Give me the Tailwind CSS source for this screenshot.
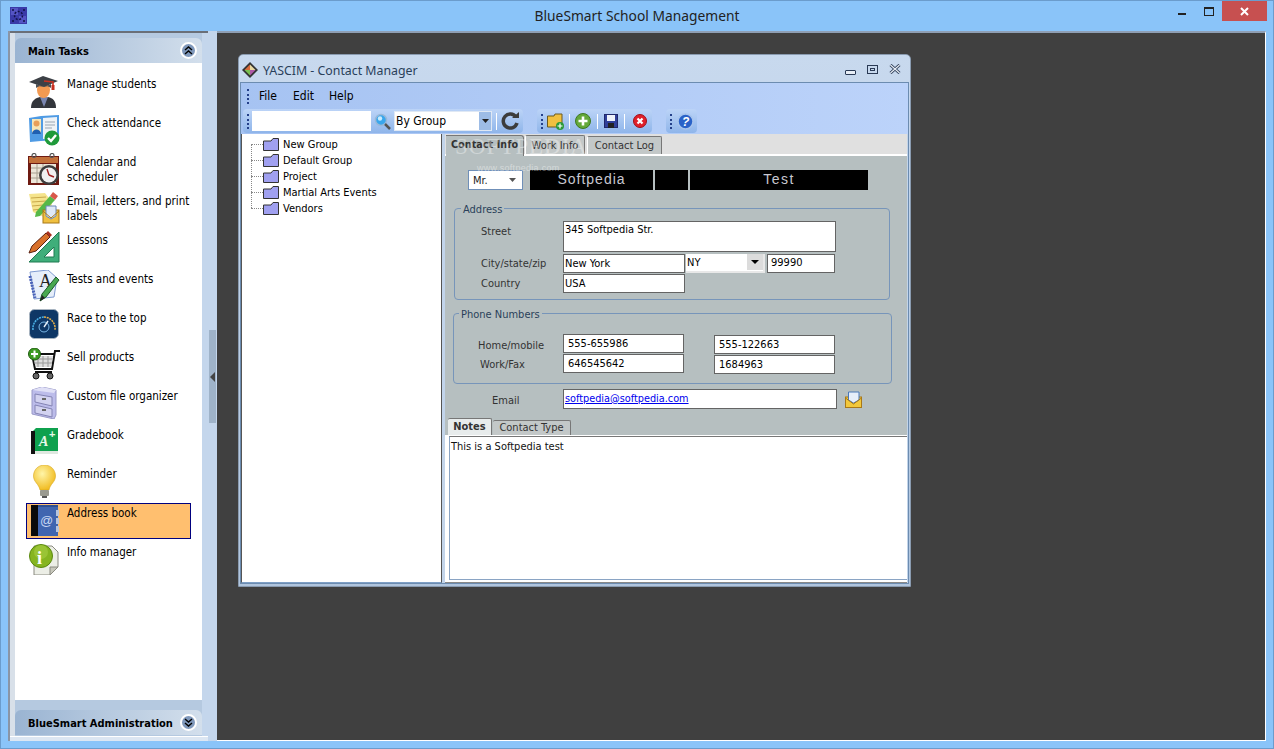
<!DOCTYPE html>
<html><head><meta charset="utf-8"><title>BlueSmart School Management</title>
<script src="https://cdn.jsdelivr.net/npm/@tailwindcss/browser@4"></script></head>
<body class="m-0 overflow-hidden">
<div class="w-[1274px] h-[749px] bg-[#8ac4f9] border border-[#6b9ccc] flex flex-col font-['DejaVu_Sans_Condensed','Noto_Sans',sans-serif] text-[11px] leading-[15px] text-black overflow-hidden">
  <!-- title bar -->
  <div class="h-[30px] shrink-0 flex items-start relative">
    <svg class="ml-[9px] mt-[6px]" width="17" height="17" viewBox="0 0 17 17"><rect width="17" height="17" fill="#3a3aa8"/><rect x="1" y="1" width="7" height="7" fill="#5454c4"/><rect x="9" y="9" width="7" height="7" fill="#5454c4"/><circle cx="8.5" cy="8.5" r="4" fill="none" stroke="#12124a" stroke-width="1.5" stroke-dasharray="2 1.5"/><circle cx="3" cy="3" r="1" fill="#12124a"/><circle cx="14" cy="3" r="1" fill="#12124a"/><circle cx="3" cy="14" r="1" fill="#12124a"/><circle cx="14" cy="14" r="1" fill="#12124a"/></svg>
    <div class="flex-1 pl-[69px] text-center font-['Noto_Sans',sans-serif] text-[13.8px] leading-[20px] mt-[5px] text-[#222]">BlueSmart School Management</div>
    <div class="w-[8px] h-[2px] bg-[#222] mt-[12px] mr-[18px]"></div>
    <div class="w-[10px] h-[9px] border border-[#222] border-t-2 mt-[6px] mr-[8px]"></div>
    <div class="w-[45px] h-[20px] bg-[#c75050] mr-[6px] flex items-center justify-center">
      <svg width="9" height="9" viewBox="0 0 9 9"><path d="M1 1 L8 8 M8 1 L1 8" stroke="#fff" stroke-width="2"/></svg>
    </div>
  </div>
  <!-- main -->
  <div class="flex flex-1 mx-[7px] mb-[7px] min-h-0">
    <!-- left panel -->
    <div class="w-[200px] bg-[#b5c9e0] border-l-2 border-[#8a95a5] flex flex-col relative">
      <div class="h-[2px] bg-[#6a6f78] mb-[5px]"></div>
      <div class="flex flex-1 min-h-0">
        <div class="w-[5px] bg-[#d8e0e9] mt-[-5px] mb-[0px]"></div>
        <div class="flex flex-col w-[187px]">
        <div class="h-[25px] rounded-t-[6px] bg-gradient-to-r from-[#9ab4d2] to-[#d3dfec] flex items-center pl-[13px] font-bold text-[11px]">
          <span class="flex-1 pt-[2px]">Main Tasks</span>
          <span class="w-[17px] h-[17px] rounded-full bg-[#7f98bb] border-2 border-white mr-[5px] flex items-center justify-center">
            <svg width="9" height="9" viewBox="0 0 9 9"><path d="M1 4 L4.5 1 L8 4 M1 8 L4.5 5 L8 8" fill="none" stroke="#000" stroke-width="1.4"/></svg>
          </span>
        </div>
        <div class="h-[637px] bg-white pt-[11px] pl-[11px] pr-[11px] flex flex-col gap-[3px] text-[11.5px]">
          <!-- items -->
          <div class="h-[36px] flex border border-transparent"><svg class="ml-[1px] mt-[1px] shrink-0" width="32" height="32" viewBox="0 0 32 32"><path d="M3 32 C3 24 8 22 12 21 L20 21 C25 22 28 25 28 32Z" fill="#33363c"/><path d="M12 21 L16 31 L20 21Z" fill="#7a86b0"/><ellipse cx="15.5" cy="14" rx="6.5" ry="8" fill="#f39a52"/><path d="M1 6 L15 0 L30 5 L16 11Z" fill="#3c4046"/><path d="M8 8 L8 12 C12 9 19 9 23 12 L23 8 L16 11Z" fill="#4c5056"/><path d="M16 5 L25 6 L25 13" fill="none" stroke="#c83020" stroke-width="1.6"/><rect x="23.5" y="9" width="3" height="5" fill="#c83020"/></svg><span class="ml-[7px] mt-[2px]">Manage students</span></div>
          <div class="h-[36px] flex border border-transparent"><svg class="ml-[1px] shrink-0" width="32" height="32" viewBox="0 0 32 32"><path d="M1 4 L13 2 L31 1 L31 26 L13 27 L2 28Z" fill="#4f9be4"/><path d="M15 4 L29 3 L29 24 L15 25Z" fill="#eef2f6"/><rect x="4" y="5" width="9" height="15" fill="#f6e6b8"/><circle cx="8.5" cy="9.5" r="3" fill="#e89f5a"/><path d="M4 20 C4 14 13 14 13 20Z" fill="#1f5fb0"/><path d="M17 8 H27 M17 11 H27 M17 14 H24" stroke="#9aa6b2" stroke-width="1"/><circle cx="24" cy="24" r="7.5" fill="#1f9a3a"/><path d="M20 24 L23 27 L28 21" fill="none" stroke="#fff" stroke-width="2.4"/></svg><span class="ml-[7px] mt-[2px]">Check attendance</span></div>
          <div class="h-[36px] flex border border-transparent"><svg class="ml-[1px] shrink-0" width="32" height="32" viewBox="0 0 32 32"><rect x="0" y="3" width="31" height="29" fill="#6e1a12"/><rect x="1" y="4" width="29" height="6" fill="#c2703a"/><rect x="3" y="11" width="25" height="19" fill="#ece6d8"/><path d="M3 15 H28 M3 20 H28 M3 25 H28 M9 11 V30 M15 11 V30" stroke="#a8a090" stroke-width="1"/><circle cx="6" cy="2.500" r="2" fill="none" stroke="#555" stroke-width="1.200"/><circle cx="24" cy="2.500" r="2" fill="none" stroke="#555" stroke-width="1.200"/><circle cx="21" cy="22" r="10" fill="#3c3c3c"/><circle cx="21" cy="22" r="7.500" fill="#f0f0f0"/><path d="M21 22 L19 16 M21 22 L26 24" stroke="#a02020" stroke-width="1.400"/></svg><span class="ml-[7px] mt-[2px]">Calendar and<br>scheduler</span></div>
          <div class="h-[36px] flex border border-transparent"><svg class="ml-[1px] shrink-0" width="32" height="32" viewBox="0 0 32 32"><path d="M1 2 L17 1 L24 10 L22 28 L5 20Z" fill="#f5e48c"/><path d="M3 6 L18 5 M4 10 L18 9 M4 14 L15 13 M5 18 L14 17" stroke="#c9a84a" stroke-width="1"/><path d="M8 20 L22 4 L27 8 L12 24 L7 25Z" fill="#57b848"/><path d="M22 4 L25 0 L30 4 L27 8Z" fill="#d8584a"/><rect x="15" y="18" width="16" height="13" fill="#f0c040" stroke="#a87818"/><path d="M18 14 H28 V24 L23 27 L18 24Z" fill="#dfe9f7" stroke="#6a88b8"/><path d="M15 19 L23 26 L31 19" fill="none" stroke="#a87818"/></svg><span class="ml-[7px] mt-[2px] whitespace-nowrap">Email, letters, and print<br>labels</span></div>
          <div class="h-[36px] flex border border-transparent"><svg class="ml-[1px] shrink-0" width="32" height="32" viewBox="0 0 32 32"><path d="M1 31 L31 1 V31Z" fill="#3fae7a" stroke="#1e7a50"/><path d="M16 26 L26 16 V26Z" fill="#fff" stroke="#1e7a50"/><path d="M1 22 L4 15 L18 2 L22 6 L8 20Z" fill="#d8702a" stroke="#5a2010"/><path d="M18 2 L20 0 L24 4 L22 6Z" fill="#a83020"/></svg><span class="ml-[7px] mt-[2px]">Lessons</span></div>
          <div class="h-[36px] flex border border-transparent"><svg class="ml-[1px] shrink-0" width="32" height="32" viewBox="0 0 32 32"><path d="M2 2 L20 0 L29 8 L26 27 L6 29Z" fill="#e6eefa" stroke="#7e9ad0"/><path d="M2 6 L7 28" stroke="#4a62b8" stroke-width="3" stroke-dasharray="2 1"/><text x="11" y="17" font-size="18" font-family="Liberation Serif" fill="#222">A</text><path d="M12 31 L14 24 L28 7 L31 10 L18 27Z" fill="#48a850" stroke="#1c5a28"/><path d="M12 31 L14 25 L17 28Z" fill="#222"/></svg><span class="ml-[7px] mt-[2px]">Tests and events</span></div>
          <div class="h-[36px] flex border border-transparent"><svg class="ml-[2px] shrink-0" width="30" height="30" viewBox="0 0 30 30"><rect x="0.500" y="0.500" width="29" height="29" rx="5" fill="#0e3766" stroke="#a8b4c0"/><path d="M4 21 A11.500 11.500 0 0 1 15 8" fill="none" stroke="#4bb2e8" stroke-width="1.500" stroke-dasharray="2 0.800"/><path d="M15 8 A11.500 11.500 0 0 1 26 21" fill="none" stroke="#e8b24b" stroke-width="1.500" stroke-dasharray="2 0.800"/><circle cx="15" cy="18" r="5" fill="none" stroke="#7ab8e8"/><path d="M15 18 L19 12" stroke="#e8f2fa" stroke-width="1.400"/></svg><span class="ml-[8px] mt-[2px]">Race to the top</span></div>
          <div class="h-[36px] flex border border-transparent"><svg class="ml-[1px] shrink-0" width="32" height="32" viewBox="0 0 32 32"><path d="M32 3 H27 L24 21 H7 L4 6 H26" fill="none" stroke="#111" stroke-width="2"/><path d="M5 8 H25 L23 19 H8Z" fill="#ddd"/><path d="M5 11 H25 M6 15 H24 M10 8 V19 M15 8 V19 M20 8 V19" stroke="#999"/><path d="M7 24 H24" stroke="#111" stroke-width="2"/><circle cx="8" cy="28" r="3" fill="#666" stroke="#111"/><circle cx="22" cy="28" r="3" fill="#666" stroke="#111"/><circle cx="6.500" cy="6" r="6" fill="#3c9a20" stroke="#1e5a10"/><path d="M6.500 2.500 V9.500 M3 6 H10" stroke="#fff" stroke-width="2"/></svg><span class="ml-[7px] mt-[2px]">Sell products</span></div>
          <div class="h-[36px] flex border border-transparent"><svg class="ml-[3px] shrink-0" width="28" height="32" viewBox="0 0 28 32"><path d="M2 3 L12 0 L26 3 V28 L24 32 L2 27Z" fill="#bcbcea" stroke="#9a9ac8"/><path d="M2 3 L12 0 L26 3 L24 6Z" fill="#e0e0f6"/><path d="M5 7 L22 10 V19 L5 15Z" fill="#d2d2f0" stroke="#8484b4"/><path d="M5 18 L22 22 V30 L5 26Z" fill="#d2d2f0" stroke="#8484b4"/><rect x="12" y="11" width="4" height="2" fill="#666"/><rect x="12" y="22" width="4" height="2" fill="#666"/></svg><span class="ml-[9px] mt-[2px]">Custom file organizer</span></div>
          <div class="h-[36px] flex border border-transparent"><svg class="ml-[4px] mt-[1px] shrink-0" width="28" height="28" viewBox="0 0 28 28"><path d="M1 5 L5 1 H27 L27 24 H5 L1 27Z" fill="#0fa14e"/><path d="M0 4 H4 V27 H0Z" fill="#111"/><path d="M4 24 H27 V27 H4Z" fill="#dfe8e0"/><text x="8" y="19" font-size="14" font-weight="bold" font-style="italic" font-family="Liberation Serif" fill="#e8f8e8">A</text><text x="18" y="11" font-size="11" font-weight="bold" font-family="Liberation Sans" fill="#e8f8e8">+</text></svg><span class="ml-[8px] mt-[2px]">Gradebook</span></div>
          <div class="h-[36px] flex border border-transparent"><svg class="ml-[6px] shrink-0" width="23" height="33" viewBox="0 0 23 33"><defs><radialGradient id="bulb" cx="0.4" cy="0.35" r="0.7"><stop offset="0" stop-color="#fff5a8"/><stop offset="1" stop-color="#f0b818"/></radialGradient></defs><path d="M11.500 0 C5 0 0.500 5 0.500 11 C0.500 17 6 19 7 25 H16 C17 19 22.500 17 22.500 11 C22.500 5 18 0 11.500 0Z" fill="url(#bulb)" stroke="#d8a820" stroke-width="0.600"/><rect x="7" y="25" width="9" height="6" rx="1" fill="#9a9a90"/><rect x="9" y="31" width="5" height="2" fill="#555"/></svg><span class="ml-[11px] mt-[2px]">Reminder</span></div>
          <div class="h-[36px] flex bg-[#ffbf6f] border border-[#00007f]"><svg class="ml-[4px] mt-[1px] shrink-0" width="28" height="32" viewBox="0 0 28 32"><rect x="0" y="0" width="27" height="31" fill="#4065b0"/><rect x="0" y="0" width="7" height="31" fill="#0a0a0a"/><path d="M7 0 H27 V2 H7Z" fill="#2f4f90"/><rect x="25" y="5" width="3" height="6" fill="#b8c4dc"/><rect x="25" y="13" width="3" height="6" fill="#b8c4dc"/><rect x="25" y="21" width="3" height="6" fill="#b8c4dc"/><text x="9" y="20" font-size="13" font-family="Liberation Sans" fill="#c8d8f4">@</text></svg><span class="ml-[8px] mt-[2px]">Address book</span></div>
          <div class="h-[36px] flex border border-transparent"><svg class="ml-[1px] shrink-0" width="32" height="32" viewBox="0 0 32 32"><path d="M6 3 H24 L30 9 V24 L22 32 H6Z" fill="#eceee6" stroke="#8a8a80"/><path d="M22 32 V24 H30Z" fill="#c8c8bc" stroke="#8a8a80"/><circle cx="13" cy="13" r="11.500" fill="#86b520" stroke="#5a8810"/><circle cx="13" cy="9" r="7" fill="#a8cf44" opacity="0.600"/><text x="9" y="21" font-size="18" font-weight="bold" font-family="Liberation Serif" fill="#fff">i</text></svg><span class="ml-[7px] mt-[2px]">Info manager</span></div>
        </div>
        <div class="h-[10px]"></div>
        <div class="h-[25px] rounded-t-[6px] bg-gradient-to-r from-[#9ab4d2] to-[#d3dfec] flex items-center pl-[13px] font-bold text-[11px]">
          <span class="flex-1 whitespace-nowrap pt-[2px]">BlueSmart Administration</span>
          <span class="w-[17px] h-[17px] rounded-full bg-[#7f98bb] border-2 border-white mr-[5px] flex items-center justify-center shrink-0">
            <svg width="9" height="9" viewBox="0 0 9 9"><path d="M1 1 L4.500 4 L8 1 M1 5 L4.500 8 L8 5" fill="none" stroke="#000" stroke-width="1.400"/></svg>
          </span>
        </div>
        </div>
        <div class="flex-1 bg-[#c4d6ec] mt-[-5px]"></div>
      </div>
      <div class="h-[5px] bg-[#dce6f2] border-t border-white"></div>
    </div>
    <!-- splitter -->
    <div class="w-[9px] bg-[#c4d6ec] flex flex-col items-center">
      <div class="mt-[299px] w-[7px] h-[93px] bg-[#9fb3c9] relative flex items-center">
        <svg width="6" height="10" viewBox="0 0 6 10" class="ml-[1px] mt-[0px]"><path d="M5 0 V10 L0 5Z" fill="#444"/></svg>
      </div>
    </div>
    <!-- MDI workspace -->
    <div class="flex-1 bg-[#404040] border-t-2 border-t-[#8f9fb4] border-r border-r-white border-b border-b-white relative">
      <!-- child window -->
      <div class="absolute left-[21px] top-[21px] w-[673px] h-[533px] rounded-t-[5px] bg-gradient-to-b from-[#c8d9ee] to-[#b0c5de] border border-[#8a9bb0] flex flex-col">
        <div class="h-[27px] shrink-0 flex items-center pl-[3px] pt-[3px] font-['Noto_Sans',sans-serif] text-[12.35px] text-[#2a3f5a]">
          <svg width="16" height="16" viewBox="0 0 16 16"><path d="M8 0 L16 8 L8 16 L0 8Z" fill="#333"/><path d="M8 2.500 L8 8 L2.500 8Z" fill="#d86a3a"/><path d="M8 2.500 L13.500 8 L8 8Z" fill="#e8d8a0"/><path d="M2.500 8 L8 8 L8 13.500Z" fill="#7ac050"/><path d="M13.500 8 L8 13.500 L8 8Z" fill="#b05aa8"/></svg>
          <span class="ml-[5px] flex-1">YASCIM - Contact Manager</span>
          <div class="w-[11px] h-[5px] border border-[#2a3a55] bg-[#e8eef6] rounded-[1px] mt-[4px] mr-[11px]"></div>
          <div class="w-[11px] h-[9px] border border-[#2a3a55] flex items-center justify-center mr-[11px] mt-[-2px]"><div class="w-[5px] h-[3px] border border-[#2a3a55]"></div></div>
          <svg class="mr-[9px] mt-[-2px]" width="12" height="10" viewBox="0 0 12 10"><path d="M1.500 1 L10.500 9 M10.500 1 L1.500 9" stroke="#2a3a55" stroke-width="3"/><path d="M1.500 1 L10.500 9 M10.500 1 L1.500 9" stroke="#e8eef6" stroke-width="1.200"/></svg>
        </div>
        <div class="flex-1 mx-[1px] mb-[2px] border border-[#6c8cb0] flex flex-col min-h-0 bg-white">
          <!-- menu + toolbar -->
          <div class="h-[51px] shrink-0 bg-gradient-to-r from-[#a6c3f2] to-[#bcd3fa] flex flex-col">
            <div class="h-[24px] flex items-center pl-[6px] pt-[2px] text-[12px]">
              <div class="w-[2px] h-[15px] border-l-2 border-dotted border-[#24408a]"></div>
              <span class="ml-[10px]">File</span><span class="ml-[16px]">Edit</span><span class="ml-[15px]">Help</span>
            </div>
            <div class="h-[27px] flex items-stretch pl-[2px] pt-[2px] pb-[1px] text-[12px]">
              <div class="w-[280px] rounded-[4px] bg-gradient-to-b from-[#bcd4f7] to-[#8fb5ea] flex items-center pl-[4px]">
                <div class="w-[2px] h-[15px] border-l-2 border-dotted border-[#24408a]"></div>
                <div class="ml-[3px] w-[119px] h-[20px] bg-white"></div>
                <svg class="ml-[3px]" width="17" height="17" viewBox="0 0 17 17"><circle cx="7" cy="7" r="5.500" fill="#39a6ec" stroke="#9ab8d8" stroke-width="1.500"/><circle cx="6" cy="5.500" r="2.200" fill="#c8ecff"/><path d="M11 11 L16 16" stroke="#555" stroke-width="2.500"/></svg>
                <div class="ml-[3px] w-[98px] h-[20px] bg-white border border-[#dfe8f4] flex items-center pl-[1px]"><span class="flex-1">By Group</span><span class="w-[12px] h-[18px] bg-[#9dbce6] flex items-center justify-center"><svg width="7" height="4" viewBox="0 0 7 4"><path d="M0 0 H7 L3.500 4Z" fill="#222"/></svg></span></div>
                <div class="ml-[4px] w-[1px] h-[17px] bg-white"></div>
                <svg class="ml-[4px]" width="18" height="18" viewBox="0 0 18 18"><path d="M15 5 A7 7 0 1 0 16 11" fill="none" stroke="#3c3c3c" stroke-width="3.500"/><path d="M11 6 H18 V0Z" fill="#3c3c3c"/></svg>
              </div>
              <div class="ml-[14px] w-[115px] rounded-[4px] bg-gradient-to-b from-[#bcd4f7] to-[#8fb5ea] flex items-center pl-[4px]">
                <div class="w-[2px] h-[15px] border-l-2 border-dotted border-[#24408a]"></div>
                <svg class="ml-[4px]" width="17" height="17" viewBox="0 0 17 17"><path d="M0.500 3 H7 L8 1 H15 V14 H0.500Z" fill="#f0c040" stroke="#6a5a20"/><circle cx="13" cy="13" r="4" fill="#2a9a3a"/><path d="M13 10.500 V15.500 M10.500 13 H15.500" stroke="#fff" stroke-width="1.200"/></svg>
                <div class="ml-[5px] w-[1px] h-[15px] bg-white"></div>
                <svg class="ml-[5px]" width="16" height="16" viewBox="0 0 16 16"><circle cx="8" cy="8" r="7.500" fill="#64a83a" stroke="#3e7820"/><path d="M8 3.500 V12.500 M3.500 8 H12.500" stroke="#fff" stroke-width="2.600"/></svg>
                <div class="ml-[6px] w-[1px] h-[15px] bg-white"></div>
                <svg class="ml-[6px]" width="14" height="14" viewBox="0 0 14 14"><rect x="0.500" y="0.500" width="13" height="13" fill="#30409a" stroke="#20286a"/><rect x="3" y="1" width="8" height="6" fill="#eef2fa"/><rect x="4" y="9" width="6" height="5" fill="#222"/></svg>
                <div class="ml-[6px] w-[1px] h-[15px] bg-white"></div>
                <svg class="ml-[8px]" width="14" height="14" viewBox="0 0 14 14"><circle cx="7" cy="7" r="6.500" fill="#e0202a" stroke="#a01018"/><path d="M4.500 4.500 L9.500 9.500 M9.500 4.500 L4.500 9.500" stroke="#fff" stroke-width="2.200"/></svg>
              </div>
              <div class="ml-[14px] w-[31px] rounded-[4px] bg-gradient-to-b from-[#bcd4f7] to-[#8fb5ea] flex items-center pl-[4px]">
                <div class="w-[2px] h-[15px] border-l-2 border-dotted border-[#24408a]"></div>
                <svg class="ml-[5px]" width="17" height="17" viewBox="0 0 17 17"><circle cx="8.500" cy="8.500" r="7.500" fill="#2a62c8" stroke="#a8c4ec" stroke-width="1.500"/><text x="5" y="13" font-size="12" font-weight="bold" font-style="italic" font-family="Liberation Sans" fill="#fff">?</text></svg>
              </div>
            </div>
          </div>
          <!-- body -->
          <div class="flex-1 flex min-h-0 bg-[#c2d4ea]">
            <!-- tree -->
            <div class="w-[201px] mr-[3px] bg-white border border-[#555] border-b-[#7f9fc5] border-t-0 flex flex-col pt-[2px] relative">
              <div class="absolute left-[9px] top-[10px] h-[64px] border-l border-dotted border-[#888]"></div>
              <div class="h-[16px] flex items-center pl-[9px]"><div class="w-[12px] border-t border-dotted border-[#888]"></div><svg width="16" height="13" viewBox="0 0 16 13"><path d="M0.500 3 H8 L10 0.500 H15.500 V12.500 H0.500Z" fill="#a0a0f0" stroke="#333"/></svg><span class="ml-[4px]">New Group</span></div>
              <div class="h-[16px] flex items-center pl-[9px]"><div class="w-[12px] border-t border-dotted border-[#888]"></div><svg width="16" height="13" viewBox="0 0 16 13"><path d="M0.500 3 H8 L10 0.500 H15.500 V12.500 H0.500Z" fill="#a0a0f0" stroke="#333"/></svg><span class="ml-[4px]">Default Group</span></div>
              <div class="h-[16px] flex items-center pl-[9px]"><div class="w-[12px] border-t border-dotted border-[#888]"></div><svg width="16" height="13" viewBox="0 0 16 13"><path d="M0.500 3 H8 L10 0.500 H15.500 V12.500 H0.500Z" fill="#a0a0f0" stroke="#333"/></svg><span class="ml-[4px]">Project</span></div>
              <div class="h-[16px] flex items-center pl-[9px]"><div class="w-[12px] border-t border-dotted border-[#888]"></div><svg width="16" height="13" viewBox="0 0 16 13"><path d="M0.500 3 H8 L10 0.500 H15.500 V12.500 H0.500Z" fill="#a0a0f0" stroke="#333"/></svg><span class="ml-[4px]">Martial Arts Events</span></div>
              <div class="h-[16px] flex items-center pl-[9px]"><div class="w-[12px] border-t border-dotted border-[#888]"></div><svg width="16" height="13" viewBox="0 0 16 13"><path d="M0.500 3 H8 L10 0.500 H15.500 V12.500 H0.500Z" fill="#a0a0f0" stroke="#333"/></svg><span class="ml-[4px]">Vendors</span></div>
            </div>
            <!-- right -->
            <div class="flex-1 flex flex-col min-w-0 relative mr-[1px]">
              <!-- tabs -->
              <div class="h-[22px] shrink-0 bg-[#e0e0e0] border-b-2 border-white flex items-end pl-[1px] text-[#333]">
                <div class="w-[78px] h-[21px] bg-[#b6bfc0] border-t border-r border-[#777] rounded-tr-[3px] font-bold text-[10.8px] text-center pt-[1px] relative top-[2px] text-[#333]">Contact Info</div>
                <div class="w-[60px] h-[19px] bg-[#c3c8c8] border-t border-r border-[#777] border-l border-l-white rounded-t-[2px] text-center ml-[1px] pt-[2px]">Work Info</div>
                <div class="w-[75px] h-[18px] bg-[#c3c8c8] border-t border-r border-[#777] border-l border-l-white rounded-t-[2px] text-center ml-[2px] pt-[1px]">Contact Log</div>
              </div>
              <!-- watermark -->
              <div class="absolute left-[10px] top-[1px] text-[23px] leading-[24px] tracking-[1px] font-['Liberation_Serif',serif] text-white opacity-35 whitespace-nowrap">SOFTPEDIA</div>
              <div class="absolute left-[32px] top-[28px] text-[9px] leading-[12px] font-['Liberation_Sans',sans-serif] tracking-[0.3px] text-white opacity-40 whitespace-nowrap">www.softpedia.com</div>
              <!-- form -->
              <div class="h-[262px] shrink-0 bg-[#b6bfc0] flex flex-col">
                <div class="flex h-[20px] mt-[14px] ml-[23px]">
                  <div class="w-[55px] bg-white border border-[#6f8fb8] flex items-center pl-[4px]"><span class="flex-1 text-[#222]">Mr.</span><svg class="mr-[6px]" width="7" height="4" viewBox="0 0 7 4"><path d="M0 0 H7 L3.500 4Z" fill="#555"/></svg></div>
                  <div class="w-[123px] ml-[7px] bg-black text-[#c8c8d0] text-[14px] font-['Liberation_Sans',sans-serif] tracking-[1px] flex items-center justify-center pb-[2px]">Softpedia</div>
                  <div class="w-[33px] ml-[2px] bg-black"></div>
                  <div class="w-[178px] ml-[2px] bg-black text-[#c8c8d0] text-[14px] font-['Liberation_Sans',sans-serif] tracking-[1.500px] flex items-center justify-center pb-[2px]">Test</div>
                </div>
                <!-- Address -->
                <div class="mt-[18px] ml-[9px] w-[436px] h-[92px] border border-[#7795ba] rounded-[4px] relative pt-[12px] text-[#333]">
                  <div class="absolute left-[6px] top-[-7px] bg-[#b6bfc0] px-[2px] text-[#2a3f5a]">Address</div>
                  <div class="flex h-[31px] mb-[2px]"><span class="w-[108px] pl-[26px] pt-[3px]">Street</span><div class="w-[273px] bg-white border border-[#646464] px-[1px] pt-[1px] text-black leading-[14px]">345 Softpedia Str.</div></div>
                  <div class="flex h-[19px] mb-[1px]"><span class="w-[108px] pl-[26px] pt-[2px]">City/state/zip</span><div class="w-[122px] bg-white border border-[#646464] px-[1px] pt-[1px] text-black">New York</div><div class="w-[79px] ml-[1px] bg-white border-b-2 border-r-2 border-[#e8e8e8] flex text-black pl-[1px]"><span class="flex-1 pt-[1px]">NY</span><span class="w-[16px] h-[16px] bg-[#dcdcdc] flex items-center justify-center"><svg width="8" height="4" viewBox="0 0 8 4"><path d="M0 0 H8 L4 4Z" fill="#000"/></svg></span></div><div class="w-[68px] ml-[2px] bg-white border border-[#646464] pl-[3px] text-black">99990</div></div>
                  <div class="flex h-[19px]"><span class="w-[108px] pl-[26px] pt-[2px]">Country</span><div class="w-[122px] bg-white border border-[#646464] px-[1px] pt-[1px] text-black">USA</div></div>
                </div>
                <!-- Phone -->
                <div class="mt-[13px] ml-[8px] w-[439px] h-[71px] border border-[#7795ba] rounded-[4px] relative pt-[20px] text-[#333]">
                  <div class="absolute left-[5px] top-[-7px] bg-[#b6bfc0] px-[2px] text-[#2a3f5a]">Phone Numbers</div>
                  <div class="flex h-[19px] mb-[1px]"><span class="w-[109px] pl-[24px] pt-[4px]">Home/mobile</span><div class="w-[121px] bg-white border border-[#646464] pl-[4px] pt-[1px] text-black">555-655986</div><div class="w-[121px] ml-[30px] mt-[1px] h-[19px] bg-white border border-[#646464] pl-[4px] pt-[1px] text-black">555-122663</div></div>
                  <div class="flex h-[19px]"><span class="w-[109px] pl-[26px] pt-[3px]">Work/Fax</span><div class="w-[121px] bg-white border border-[#646464] pl-[4px] pt-[1px] text-black">646545642</div><div class="w-[121px] ml-[30px] mt-[1px] h-[19px] bg-white border border-[#646464] pl-[4px] pt-[1px] text-black">1684963</div></div>
                </div>
                <!-- email -->
                <div class="flex mt-[5px] h-[20px] text-[#333]">
                  <span class="w-[118px] pl-[47px] pt-[4px]">Email</span>
                  <div class="w-[274px] bg-white border border-[#646464] px-[1px] pt-[1px] text-[10.8px] text-[#0000ee] underline">softpedia@softpedia.com</div>
                  <svg class="ml-[8px] mt-[2px]" width="17" height="17" viewBox="0 0 17 17"><rect x="0.500" y="6" width="16" height="10.500" fill="#f2c83c" stroke="#a87818"/><path d="M3.500 1 H14 V9 L8.500 12 L3.500 9Z" fill="#e6eefa" stroke="#4a78b8"/><path d="M0.500 7 L8.500 13 L16.500 7" fill="none" stroke="#a87818"/></svg>
                </div>
              </div>
              <!-- notes tabs -->
              <div class="h-[18px] shrink-0 bg-[#b6bfc0] flex items-end pl-[3px] border-b border-white text-[#333]">
                <div class="w-[44px] h-[17px] bg-[#e8ecec] border-t border-r border-[#777] rounded-t-[2px] font-bold text-center">Notes</div>
                <div class="w-[78px] h-[15px] bg-[#c3c8c8] border-t border-r border-[#777] rounded-t-[2px] text-center ml-[1px] leading-[14px]">Contact Type</div>
              </div>
              <!-- notes -->
              <div class="flex-1 bg-white border-b border-[#888] pl-[4px] pb-[2px] flex min-h-0">
                <div class="flex-1 bg-white border border-[#8aa4c4] border-t-[#777] border-r-0 px-[1px] pt-[2px] text-[#111]">This is a Softpedia test</div>
              </div>
            </div>
          </div>
        </div>
      </div>
    </div>
  </div>
</div>
</body></html>
